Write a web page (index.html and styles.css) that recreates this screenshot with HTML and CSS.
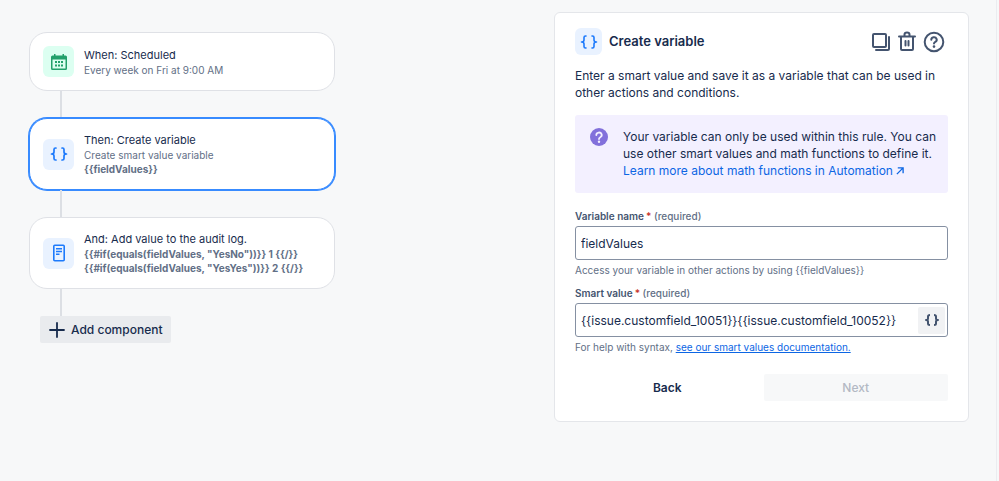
FILE: index.html
```html
<!DOCTYPE html>
<html lang="en">
<head>
    <meta charset="UTF-8">
    <meta name="viewport" content="width=device-width, initial-scale=1">
    <title>Create variable</title>
    <link rel="stylesheet" href="styles.css">
</head>
<body>

<main class="page">
    <!-- rule chain -->
    <section class="rule">
        <article class="card">
            <span class="icon icon-green">
                <svg width="16" height="16" viewBox="0 0 16 16">
                    <path fill="#22a06b" fill-rule="evenodd" d="M3 0h1.500v1.500h7V0H13v1.500h1.500A1.500 1.500 0 0 1 16 3v11.500a1.500 1.500 0 0 1-1.500 1.500h-13A1.500 1.500 0 0 1 0 14.500V3a1.500 1.500 0 0 1 1.500-1.500H3zM1.500 5.500v9h13v-9z"/>
                    <path fill="#22a06b" d="M4 7h2v2H4zM7 7h2v2H7zM10 7h2v2h-2zM4 10.500h2v2H4zM7 10.500h2v2H7zM10 10.500h2v2h-2z"/>
                </svg>
            </span>
            <div class="text">
                <h2>When: Scheduled</h2>
                <p>Every week on Fri at 9:00 AM</p>
            </div>
        </article>
        <div class="line"></div>
        <article class="card selected">
            <span class="icon">
                <svg width="18" height="16" viewBox="0 0 18 16" fill="none" stroke="#1d7afc" stroke-width="1.700" stroke-linecap="round" stroke-linejoin="round">
                    <path d="M6 2H5.500Q4 2 4 3.500V6Q4 8 1.500 8Q4 8 4 10V12.500Q4 14 5.500 14H6M12 2h.5Q14 2 14 3.500V6Q14 8 16.500 8Q14 8 14 10V12.500Q14 14 12.500 14H12"/>
                </svg>
            </span>
            <div class="text">
                <h2>Then: Create variable</h2>
                <p>Create smart value variable</p>
                <p><b>{{fieldValues}}</b></p>
            </div>
        </article>
        <div class="line"></div>
        <article class="card">
            <span class="icon">
                <svg width="12" height="18" viewBox="0 0 12 18" fill="none" stroke="#1d7afc" stroke-width="1.600">
                    <rect x="0.800" y="1.300" width="10.400" height="15.400" rx="1"/>
                    <path d="M3 4.800h6M3 7.500h6M3 10.200h3.500"/>
                </svg>
            </span>
            <div class="text">
                <h2>And: Add value to the audit log.</h2>
                <p><b>{{#if(equals(fieldValues, "YesNo"))}} 1 {{/}}</b></p>
                <p><b>{{#if(equals(fieldValues, "YesYes"))}} 2 {{/}}</b></p>
            </div>
        </article>
        <div class="line"></div>
        <button type="button" class="add">
            <svg width="16" height="16" viewBox="0 0 16 16" fill="none" stroke="#172b4d" stroke-width="1.800" stroke-linecap="round">
                <path d="M8 1v14M1 8h14"/>
            </svg>
            Add component
        </button>
    </section>

    <!-- component settings -->
    <form class="panel">
        <header class="panel-head">
            <span class="icon icon-small">
                <svg width="18" height="16" viewBox="0 0 18 16" fill="none" stroke="#1d7afc" stroke-width="1.600" stroke-linecap="round" stroke-linejoin="round">
                    <path d="M6 2H5.500Q4 2 4 3.500V6Q4 8 1.500 8Q4 8 4 10V12.500Q4 14 5.500 14H6M12 2h.5Q14 2 14 3.500V6Q14 8 16.500 8Q14 8 14 10V12.500Q14 14 12.500 14H12"/>
                </svg>
            </span>
            <h1>Create variable</h1>
            <div class="tools">
                <button type="button" aria-label="Duplicate">
                    <svg width="20" height="22" viewBox="0 0 20 22" fill="none" stroke="#44546f" stroke-width="2">
                        <rect x="2" y="3" width="13" height="13" rx="1"/>
                        <path d="M18 6v12q0 1-1 1H5" stroke-linecap="round"/>
                    </svg>
                </button>
                <button type="button" aria-label="Delete">
                    <svg width="20" height="22" viewBox="0 0 20 22" fill="none" stroke="#44546f" stroke-width="2" stroke-linecap="round">
                        <path d="M2 5.500h16M4 5.500V18q0 1 1 1h10q1 0 1-1V5.500M7.500 5V3.500q0-2 2.500-2t2.500 2V5M8.500 10v4.500M11.500 10v4.500"/>
                    </svg>
                </button>
                <button type="button" aria-label="Help">
                    <svg width="22" height="22" viewBox="0 0 22 22" fill="none" stroke="#44546f" stroke-width="2" stroke-linecap="round">
                        <circle cx="11" cy="11" r="9.300"/>
                        <path d="M8.300 8.800a2.700 2.500 0 1 1 4 2.100Q11 11.600 11 12.600"/>
                        <circle cx="11" cy="15.600" r="1.300" fill="#44546f" stroke="none"/>
                    </svg>
                </button>
            </div>
        </header>

        <p class="desc">Enter a smart value and save it as a variable that can be used in other actions and conditions.</p>

        <div class="info">
            <svg width="18" height="18" viewBox="0 0 18 18" fill="none">
                <circle cx="9" cy="9" r="9" fill="#8270db"/>
                <path d="M6.300 7a2.700 2.500 0 1 1 4 2.200Q9 9.900 9 11" stroke="#f3f0ff" stroke-width="1.800" stroke-linecap="round"/>
                <circle cx="9" cy="13.800" r="1.200" fill="#f3f0ff"/>
            </svg>
            <p>Your variable can only be used within this rule. You can use other smart values and math functions to define it.
                <a href="#">Learn more about math functions in Automation
                    <svg width="8" height="8" viewBox="0 0 9 9" fill="none" stroke="#0c66e4" stroke-width="1.500">
                        <path d="M1 8l7-7M2 1h6v6"/>
                    </svg></a>
            </p>
        </div>

        <div class="field">
            <label for="name">Variable name<i>*</i> <span>(required)</span></label>
            <div class="box">
                <input id="name" type="text" value="fieldValues">
            </div>
            <p class="help">Access your variable in other actions by using {{fieldValues}}</p>
        </div>

        <div class="field">
            <label for="value">Smart value<i>*</i> <span>(required)</span></label>
            <div class="box">
                <input id="value" type="text" value="{{issue.customfield_10051}}{{issue.customfield_10052}}">
                <button type="button" class="insert" aria-label="Insert smart value">
                    <svg width="16" height="14" viewBox="0 0 16 14" fill="none" stroke="#44546f" stroke-width="2" stroke-linejoin="round">
                        <path d="M6 2Q4 2 4 3.500V5.500Q4 7 2 7Q4 7 4 8.500V10.500Q4 12 6 12M10 2q2 0 2 1.500V5.500Q12 7 14 7Q12 7 12 8.500V10.500Q12 12 10 12"/>
                    </svg>
                </button>
            </div>
            <p class="help">For help with syntax, <a href="#">see our smart values documentation.</a></p>
        </div>

        <footer class="actions">
            <button type="button">Back</button>
            <button type="submit" disabled>Next</button>
        </footer>
    </form>
</main>

</body>
</html>
```

FILE: styles.css
```css
*{
    box-sizing: border-box;
    margin: 0;
    padding: 0;
}

body{
    background-color: #f7f8f9;
    color: #172b4d;
    font-family: Inter, "Liberation Sans", sans-serif;
    font-size: 12px;
    line-height: 17px;
}

button, input{
    font: inherit;
    color: inherit;
    border: none;
    background: none;
}

svg{
    flex: none;
}

.page{
    display: flex;
    justify-content: space-between;
    align-items: flex-start;
    min-height: 100vh;
    margin-right: 2px;
    padding: 12px 27px 12px 29px;
    border-right: 1px solid #ebecf0;
}

/* left column */
.rule{
    flex: 0 1 306px;
    padding-top: 20px;
}

.card{
    display: flex;
    align-items: center;
    gap: 10px;
    padding: 13px;
    border: 1px solid #dfe1e6;
    border-radius: 18px;
    background-color: #fff;
}

.selected{
    border-color: #388bff;
    box-shadow: 0 0 0 1px #388bff;
}

.icon{
    display: flex;
    flex: none;
    align-items: center;
    justify-content: center;
    width: 31px;
    height: 31px;
    border-radius: 6px;
    background-color: #e9f2ff;
}

.icon-green{
    background-color: #dcfff1;
}

.icon-small{
    width: 27px;
    height: 27px;
}

.card h2{
    font-size: 11px;
    font-weight: 400;
    line-height: 16px;
}

.card p{
    color: #626f86;
    font-size: 10px;
    line-height: 14px;
}

.line{
    width: 2px;
    height: 27px;
    margin-left: 31px;
    background-color: #dcdfe4;
}

.add{
    display: flex;
    align-items: center;
    gap: 6px;
    height: 27px;
    margin-left: 11px;
    padding: 0 8px 0 9px;
    border-radius: 2px;
    background-color: #e9ebee;
    font-weight: 500;
}

/* right column */
.panel{
    flex: 0 1 415px;
    padding: 15px 20px 20px;
    border: 1px solid #e4e6ea;
    border-radius: 6px;
    background-color: #fff;
}

.panel-head{
    display: flex;
    align-items: center;
    gap: 7px;
    margin-bottom: 12px;
}

.panel-head h1{
    font-size: 13px;
    font-weight: 600;
}

.tools{
    display: flex;
    gap: 6px;
    margin-left: auto;
    padding-right: 3px;
}

.tools button{
    display: flex;
}

.info{
    display: flex;
    gap: 15px;
    margin: 14px 0 16px;
    padding: 13px 8px 14px 15px;
    border-radius: 3px;
    background-color: #f3f0ff;
}

a{
    color: #0c66e4;
}

.info a{
    display: block;
    text-decoration: none;
}

.field{
    margin-bottom: 9px;
}

.field label{
    display: block;
    margin-bottom: 3px;
    color: #44546f;
    font-size: 10px;
    font-weight: 600;
    line-height: 14px;
}

.field label i{
    margin-left: 2px;
    color: #c9372c;
    font-style: normal;
}

.field label span{
    color: #626f86;
    font-weight: 500;
}

.box{
    display: flex;
    align-items: center;
    height: 34px;
    padding: 0 2px 0 5px;
    border: 1px solid #8590a2;
    border-radius: 3px;
}

.box input{
    flex: 1;
    min-width: 0;
    outline: none;
}

.insert{
    display: flex;
    align-items: center;
    justify-content: center;
    width: 27px;
    height: 27px;
    border-radius: 2px;
    background-color: #f1f2f4;
}

.help{
    margin-top: 3px;
    color: #626f86;
    font-size: 10px;
    line-height: 14px;
}

.actions{
    display: grid;
    grid-template-columns: 1fr 1fr;
    gap: 4px;
    margin-top: 20px;
}

.actions button{
    height: 27px;
    border-radius: 2px;
    font-weight: 600;
}

.actions button:disabled{
    background-color: #f7f8f9;
    color: #b3b9c4;
    font-weight: 500;
}
```
